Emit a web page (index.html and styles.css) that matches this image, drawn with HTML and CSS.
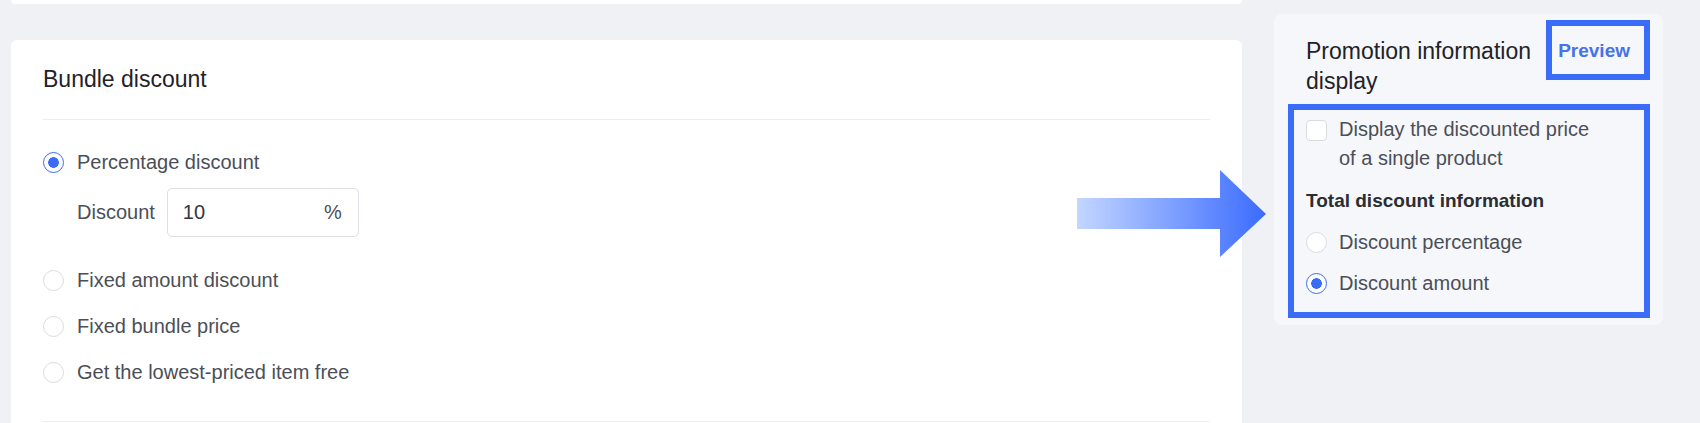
FILE: index.html
```html
<!DOCTYPE html>
<html lang="en">
<head>
    <meta charset="UTF-8">
    <meta name="viewport" content="width=device-width, initial-scale=1.0">
    <title>Bundle discount</title>
    <link rel="stylesheet" href="styles.css">
</head>
<body>

<div class="page">
    <div class="main-col">
        <div class="card card-top"></div>

        <section class="card bundle">
            <h2 class="card-title">Bundle discount</h2>

            <div class="options">
                <label class="radio-row">
                    <span class="radio checked"></span>
                    Percentage discount
                </label>

                <div class="discount-field">
                    <span class="field-label">Discount</span>
                    <div class="input-box">
                        <span>10</span>
                        <span class="unit">%</span>
                    </div>
                </div>

                <label class="radio-row after-field">
                    <span class="radio"></span>
                    Fixed amount discount
                </label>
                <label class="radio-row">
                    <span class="radio"></span>
                    Fixed bundle price
                </label>
                <label class="radio-row">
                    <span class="radio"></span>
                    Get the lowest-priced item free
                </label>
            </div>
        </section>
    </div>

    <aside class="promo">
        <div class="promo-head">
            <h3>Promotion information display</h3>
            <a href="#" class="preview mark">Preview</a>
        </div>

        <div class="promo-options mark">
            <label class="check-row">
                <span class="checkbox"></span>
                <span class="check-text">Display the discounted price of a single product</span>
            </label>

            <div class="group-title">Total discount information</div>

            <label class="radio-row">
                <span class="radio"></span>
                Discount percentage
            </label>
            <label class="radio-row">
                <span class="radio checked"></span>
                Discount amount
            </label>
        </div>
    </aside>

    <!-- Pfeil zwischen Formular und Vorschau -->
    <svg class="arrow" width="189" height="87" viewBox="0 0 189 87">
        <defs>
            <linearGradient id="arrowFill" x1="0" y1="0" x2="1" y2="0">
                <stop offset="0" stop-color="#c3d6ff"/>
                <stop offset="1" stop-color="#3a6bff"/>
            </linearGradient>
        </defs>
        <path d="M0 28 H143 V0 L189 44 L143 87 V59 H0 Z" fill="url(#arrowFill)"/>
    </svg>
</div>

</body>
</html>
```

FILE: styles.css
```css
html,
body {
    margin: 0;
    padding: 0;
    height: 423px;
    overflow: hidden;
}

body {
    font-family: "Liberation Sans", Arial, sans-serif;
    background-color: #f0f1f5;
    color: #4b4f58;
}

.page {
    position: relative;
    display: flex;
    align-items: flex-start;
    padding-left: 11px;
}

.main-col {
    width: 1231px;
    flex-shrink: 0;
}

.card {
    background: #fff;
    border-radius: 6px;
}

.card-top {
    height: 4px;
    border-radius: 0 0 6px 6px;
}

.bundle {
    margin-top: 36px;
    padding: 0 32px;
    height: 383px;
    border-radius: 6px 6px 0 0;
}

.card-title {
    margin: 0;
    padding: 23px 0 24px 0;
    font-size: 23px;
    line-height: 32px;
    font-weight: normal;
    color: #1f2228;
    border-bottom: 1px solid #ebedf0;
}

.options {
    display: flex;
    flex-direction: column;
    padding: 28px 0 35px 0;
    border-bottom: 1px solid #ebedf0;
}

.radio-row {
    display: flex;
    align-items: center;
    height: 28px;
    font-size: 20px;
    line-height: 28px;
}

.options .radio-row + .radio-row {
    margin-top: 18px;
}

.options .after-field {
    margin-top: 29px;
}

.radio {
    box-sizing: border-box;
    width: 21px;
    height: 21px;
    margin-right: 13px;
    border: 1px solid #d9dce2;
    border-radius: 50%;
    background: #fff;
    flex-shrink: 0;
}

.radio.checked {
    border: 1.5px solid #3b6cf6;
    background: radial-gradient(circle, #3b6cf6 0 5px, #fff 5.6px);
}

.discount-field {
    display: flex;
    align-items: center;
    margin-top: 12px;
    padding-left: 34px;
    font-size: 20px;
}

.field-label {
    margin-right: 12px;
}

.input-box {
    box-sizing: border-box;
    display: flex;
    align-items: center;
    justify-content: space-between;
    width: 192px;
    height: 49px;
    padding: 0 16px 0 15px;
    border: 1px solid #dcdfe6;
    border-radius: 5px;
    color: #33363d;
}

.unit {
    color: #4b4f58;
}

/* Rechte Spalte */
.promo {
    box-sizing: border-box;
    width: 389px;
    margin-left: 32px;
    margin-top: 14px;
    padding: 6px 13px 7px 32px;
    background: #f6f7fa;
    border-radius: 8px;
    flex-shrink: 0;
}

.promo-head {
    display: flex;
    align-items: flex-start;
    justify-content: space-between;
}

.promo-head h3 {
    flex: 1;
    margin: 0;
    padding-top: 16px;
    font-size: 23px;
    line-height: 30px;
    font-weight: normal;
    color: #1f2228;
}

.mark {
    border: 6px solid #3b6cf8;
}

.preview {
    padding: 11px 14px 9px 6px;
    font-size: 19px;
    line-height: 28px;
    font-weight: bold;
    color: #4672ea;
    text-decoration: none;
}

.promo-options {
    margin-top: 8px;
    margin-left: -18px;
    padding: 5px 12px 15px 12px;
    font-size: 20px;
}

.check-row {
    display: flex;
    align-items: flex-start;
    line-height: 29px;
}

.checkbox {
    box-sizing: border-box;
    width: 21px;
    height: 21px;
    margin-top: 5px;
    margin-right: 12px;
    border: 1px solid #d9dce2;
    border-radius: 4px;
    background: #fff;
    flex-shrink: 0;
}

.check-text {
    max-width: 262px;
}

.group-title {
    margin-top: 13px;
    line-height: 29px;
    font-size: 19px;
    font-weight: bold;
    color: #2a2d33;
}

.promo-options .radio-row {
    margin-top: 13px;
}

.promo-options .radio {
    margin-right: 12px;
}

.arrow {
    position: absolute;
    left: 1077px;
    top: 170px;
}
```
